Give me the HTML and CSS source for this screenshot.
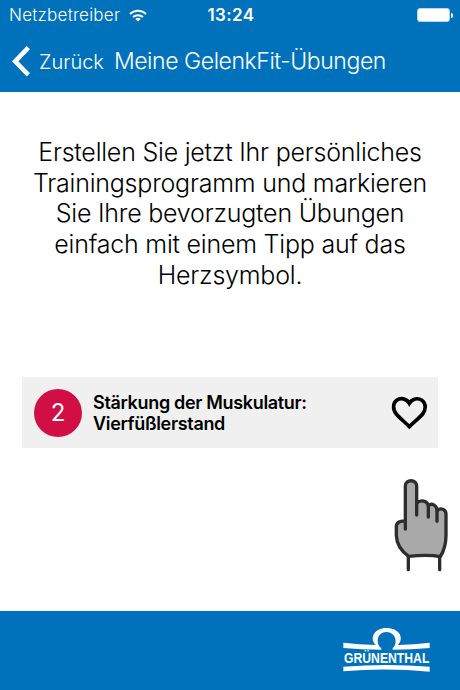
FILE: index.html
```html
<!DOCTYPE html>
<html lang="de">
<head>
    <meta charset="UTF-8">
    <meta name="viewport" content="width=device-width, initial-scale=1.0">
    <title>Meine GelenkFit-Übungen</title>
    <link rel="stylesheet" href="styles.css">
</head>
<body>
    <header class="header">
        <div class="status-bar">
            <div class="carrier">
                <span class="carrier-name">Netzbetreiber</span>
                <svg class="wifi" viewBox="0 0 18 13" fill="none" stroke="#fff" stroke-width="2">
                    <path d="M1 5a11.5 11.5 0 0 1 16 0"/>
                    <path d="M4 8.1a7.4 7.4 0 0 1 10 0"/>
                    <path d="M9 12.6L6.3 10a4 4 0 0 1 5.4 0z" fill="#fff" stroke="none"/>
                </svg>
            </div>
            <span class="time">13:24</span>
            <div class="battery">
                <span class="battery-body"></span>
                <span class="battery-tip"></span>
            </div>
        </div>
        <nav class="nav">
            <a class="back" href="#">
                <svg class="chevron" viewBox="0 0 18 31" fill="none" stroke="#fff" stroke-width="4.6">
                    <path d="M16.4 1.7L3.2 15.3l13.2 13.6"/>
                </svg>
                <span class="back-text">Zurück</span>
            </a>
            <h1 class="title">Meine GelenkFit-Übungen</h1>
        </nav>
    </header>

    <main class="content">
        <p class="intro">
            Erstellen Sie jetzt Ihr persönliches<br>
            Trainingsprogramm und markieren<br>
            Sie Ihre bevorzugten Übungen<br>
            einfach mit einem Tipp auf das<br>
            Herzsymbol.
        </p>
        <div class="exercise">
            <span class="number">2</span>
            <p class="exercise-name">Stärkung der Muskulatur:<br>Vierfüßlerstand</p>
            <svg class="heart" viewBox="60 72 117 108" fill="none" stroke="#000" stroke-width="11">
                <path d="M118 97C109 81 91 80 80 88C68 97 68 116 79 129C87 139 104 153 118 167C132 153 150 139 158 129C168 116 169 98 156 88C144 80 127 82 118 97z"/>
            </svg>
        </div>
        <svg class="hand" viewBox="42 18 168 288" stroke="#2d2d2d" stroke-width="10" stroke-linecap="round" stroke-linejoin="round">
            <path d="M76 177V48C76 27 110 27 110 48V99C121 88 143 92 145 108C154 96 171 106 171 122C182 112 198 117 198 133V196C198 222 191 244 181 260C149 254 116 256 86 259C65 244 50 221 49 196V169C49 157 62 151 76 154" fill="#a9a9a9"/>
            <path d="M110 96V135M145 107V141M171 122V154M85 261V299M179 262V299" fill="none"/>
        </svg>
    </main>

    <footer class="footer">
        <svg class="logo" viewBox="36 78 270 144">
            <path d="M40 128Q88 134 137 135C117 114 133 84 169 84C207 84 224 113 204 135Q252 134 299 128V144Q246 149 188 149V144C204 133 199 96 169 96C140 96 136 133 154 144V149Q94 149 40 144z" fill="#fff"/>
            <path d="M40 200Q170 190 299 200V215Q170 203 40 214z" fill="#fff"/>
            <text class="logo-text" x="42" y="189" textLength="256" lengthAdjust="spacingAndGlyphs">GRÜNENTHAL</text>
        </svg>
    </footer>
</body>
</html>
```
FILE: styles.css
```css
* {
    box-sizing: border-box;
}
body {
    margin: 0;
    height: 690px;
    display: flex;
    flex-direction: column;
    font-family: Inter, "Liberation Sans", sans-serif;
    background-color: #fff;
    color: #000;
}
.header {
    height: 92px;
    background-color: #0072bc;
    color: #fff;
}
.status-bar {
    height: 30px;
    padding: 0 7px 0 9px;
    display: grid;
    grid-template-columns: 1fr auto 1fr;
    align-items: center;
}
.carrier {
    display: flex;
    align-items: center;
    gap: 9px;
}
.carrier-name {
    font-size: 17px;
    font-weight: 300;
    letter-spacing: 0.25px;
}
.wifi {
    width: 18px;
    height: 13px;
}
.time {
    font-size: 17px;
    font-weight: 600;
    letter-spacing: 0.4px;
}
.battery {
    display: flex;
    align-items: center;
    justify-content: flex-end;
    gap: 1px;
}
.battery-body {
    width: 33px;
    height: 14px;
    border: 1px solid #b5d8ef;
    border-radius: 3px;
    background-color: #fff;
}
.battery-tip {
    width: 2px;
    height: 5px;
    border-radius: 0 2px 2px 0;
    background-color: #fff;
}
.nav {
    display: flex;
    align-items: center;
    height: 62px;
    padding-left: 12px;
}
.back {
    display: flex;
    align-items: center;
    gap: 9px;
    color: #fff;
    text-decoration: none;
}
.chevron {
    width: 18px;
    height: 31px;
}
.back-text {
    padding-top: 1px;
    font-size: 20px;
    font-weight: 300;
}
.title {
    margin: 0 0 0 10px;
    font-size: 23px;
    font-weight: 300;
    letter-spacing: -0.43px;
    white-space: nowrap;
}
.content {
    flex: 1;
    display: flex;
    flex-direction: column;
    padding: 45px 22px 0;
}
.intro {
    margin: 0;
    height: 240px;
    font-size: 25px;
    font-weight: 300;
    line-height: 30.7px;
    letter-spacing: -0.22px;
    text-align: center;
    white-space: nowrap;
}
.exercise {
    display: flex;
    align-items: center;
    height: 71px;
    padding: 0 9px 0 12px;
    background-color: #f0f0f0;
}
.number {
    width: 48px;
    height: 48px;
    border-radius: 50%;
    background-color: #d20f45;
    color: #fff;
    font-size: 24px;
    line-height: 48px;
    text-align: center;
}
.exercise-name {
    flex: 1;
    margin: 0 0 0 11px;
    font-size: 18px;
    font-weight: 600;
    line-height: 21px;
    letter-spacing: -0.33px;
}
.heart {
    width: 39px;
    height: 36px;
}
.hand {
    width: 56px;
    height: 96px;
    margin: 28px -12px 0 0;
    align-self: flex-end;
}
.footer {
    display: flex;
    justify-content: flex-end;
    height: 79px;
    padding: 15px 28px 0 0;
    background-color: #0072bc;
}
.logo {
    width: 90px;
    height: 48px;
    overflow: visible;
}
.logo-text {
    font-family: "Liberation Sans", sans-serif;
    font-size: 45px;
    font-weight: 700;
    fill: #fff;
}
```
